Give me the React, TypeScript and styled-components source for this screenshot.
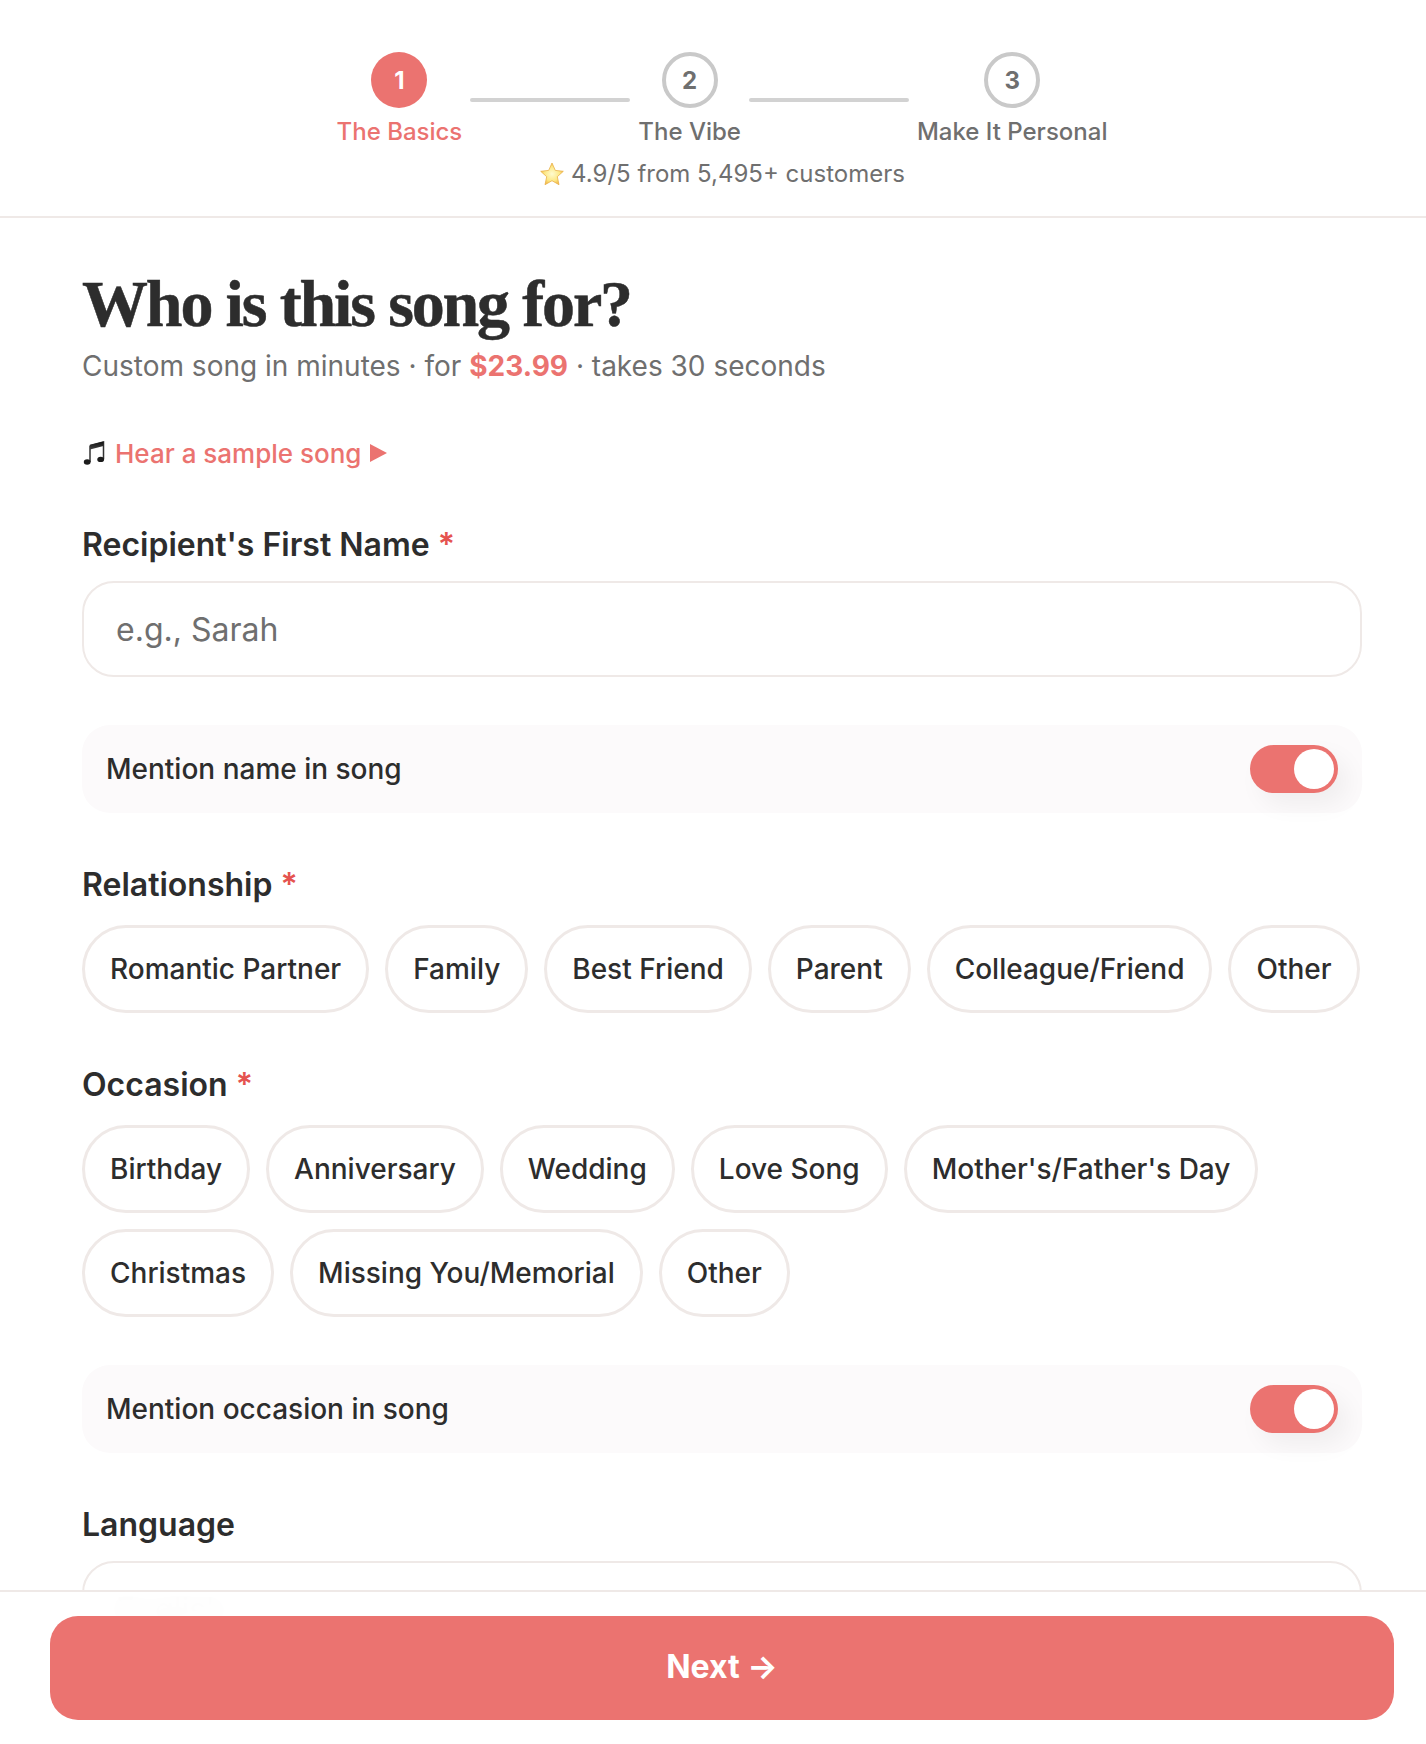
import styled, { createGlobalStyle } from "styled-components";

const coral = "#eb7370";
const ink = "#2d2d2d";
const muted = "#6f6f6f";
const line = "#efe9e7";

const GlobalStyle = createGlobalStyle`
  html, body {
    margin: 0;
    height: 100%;
    overflow: hidden;
    background: #fff;
    font-family: Inter, "Liberation Sans", sans-serif;
    color: ${ink};
  }
  * { box-sizing: border-box; }
`;

const steps = ["The Basics", "The Vibe", "Make It Personal"];
const relationships = ["Romantic Partner", "Family", "Best Friend", "Parent", "Colleague/Friend", "Other"];
const occasions = [
  "Birthday",
  "Anniversary",
  "Wedding",
  "Love Song",
  "Mother's/Father's Day",
  "Christmas",
  "Missing You/Memorial",
  "Other",
];

const StarIcon = () => (
  <svg width="26" height="26" viewBox="0 0 26 26">
    <defs>
      <radialGradient id="star" cx="0.5" cy="0.5" r="0.6">
        <stop offset="0" stopColor="#fffbd0" />
        <stop offset="0.55" stopColor="#fde886" />
        <stop offset="1" stopColor="#f0a72a" />
      </radialGradient>
    </defs>
    <path
      d="M13 2l3.3 7.4 8 .9-6 5.4 1.7 8-7-4-7 4 1.7-8-6-5.4 8-.9z"
      fill="url(#star)"
      stroke="#e8b04a"
      strokeWidth="0.8"
      strokeLinejoin="round"
    />
  </svg>
);

const NoteIcon = () => (
  <svg width="24" height="26" viewBox="0 0 24 26">
    <defs>
      <linearGradient id="note" x1="0" y1="0" x2="0" y2="1">
        <stop offset="0" stopColor="#111" />
        <stop offset="1" stopColor="#444" />
      </linearGradient>
    </defs>
    <path d="M8 5.5L21.5 2v17M8 5.5V22" fill="none" stroke="#333" strokeWidth="1.5" />
    <path d="M8 5L21.5 1.5v4.5L8 9.5z" fill="url(#note)" />
    <ellipse cx="5.2" cy="22" rx="3.4" ry="2.7" fill="#1c1c1c" />
    <ellipse cx="18.7" cy="19.4" rx="3.4" ry="2.7" fill="#1c1c1c" />
  </svg>
);

const App = () => {
  return (
    <Page>
      <GlobalStyle />
      <Header>
        <Stepper>
          {steps.map((label, i) => (
            <StepGroup key={label}>
              {i > 0 && <StepLine />}
              <Step>
                <StepCircle $active={i === 0}>{i + 1}</StepCircle>
                <StepLabel $active={i === 0}>{label}</StepLabel>
              </Step>
            </StepGroup>
          ))}
        </Stepper>
        <Rating>
          <StarIcon />
          4.9/5 from 5,495+ customers
        </Rating>
      </Header>

      <Content>
        <Title>Who is this song for?</Title>
        <Subtitle>
          Custom song in minutes · for <Price>$23.99</Price> · takes 30 seconds
        </Subtitle>
        <SampleLink>
          <NoteIcon />
          <SampleText>Hear a sample song</SampleText>
          <PlayArrow />
        </SampleLink>

        <NameLabel>
          Recipient's First Name <Required>*</Required>
        </NameLabel>
        <TextInput placeholder="e.g., Sarah" />

        <ToggleRow>
          <ToggleText>Mention name in song</ToggleText>
          <Toggle>
            <Knob />
          </Toggle>
        </ToggleRow>

        <SectionLabel>
          Relationship <Required>*</Required>
        </SectionLabel>
        <Chips>
          {relationships.map((item) => (
            <Chip key={item}>{item}</Chip>
          ))}
        </Chips>

        <SectionLabel>
          Occasion <Required>*</Required>
        </SectionLabel>
        <Chips>
          {occasions.map((item) => (
            <Chip key={item}>{item}</Chip>
          ))}
        </Chips>

        <ToggleRow>
          <ToggleText>Mention occasion in song</ToggleText>
          <Toggle>
            <Knob />
          </Toggle>
        </ToggleRow>

        <SectionLabel>Language</SectionLabel>
        <SelectBox>English</SelectBox>
      </Content>

      <Footer>
        <NextButton>Next →</NextButton>
      </Footer>
    </Page>
  );
};

export default App;

const Page = styled.div`
  height: 100vh;
  overflow: hidden;
`;

const Header = styled.header`
  height: 218px;
  padding: 52px 0 0 18px;
  border-bottom: 2px solid ${line};
  display: flex;
  flex-direction: column;
  align-items: center;
`;

const Stepper = styled.div`
  display: flex;
  align-items: flex-start;
`;

const StepGroup = styled.div`
  display: flex;
  align-items: flex-start;
`;

const Step = styled.div`
  display: flex;
  flex-direction: column;
  align-items: center;
`;

const StepCircle = styled.div<{ $active: boolean }>`
  width: 56px;
  height: 56px;
  border-radius: 50%;
  display: flex;
  align-items: center;
  justify-content: center;
  font-size: 24px;
  font-weight: 700;
  color: ${(p) => (p.$active ? "#fff" : muted)};
  background: ${(p) => (p.$active ? coral : "#fff")};
  border: ${(p) => (p.$active ? "none" : "4px solid #c9c9c9")};
`;

const StepLabel = styled.div<{ $active: boolean }>`
  margin-top: 8px;
  font-size: 24px;
  line-height: 32px;
  font-weight: 500;
  white-space: nowrap;
  color: ${(p) => (p.$active ? coral : muted)};
`;

const StepLine = styled.div`
  width: 160px;
  height: 4px;
  margin: 46px 8px 0;
  border-radius: 2px;
  background: #d2d2d2;
`;

const Rating = styled.div`
  margin-top: 10px;
  display: flex;
  align-items: center;
  gap: 6px;
  font-size: 24px;
  line-height: 32px;
  color: ${muted};
`;

const Content = styled.main`
  padding: 0 64px 0 82px;
`;

const Title = styled.h1`
  margin: 44px 0 0;
  font-family: "Liberation Serif", serif;
  font-size: 66px;
  line-height: 84px;
  font-weight: 700;
  letter-spacing: -2.15px;
  -webkit-text-stroke: 0.5px ${ink};
  color: ${ink};
`;

const Subtitle = styled.p`
  margin: 0;
  font-size: 28px;
  line-height: 40px;
  color: ${muted};
`;

const Price = styled.span`
  color: ${coral};
  font-weight: 700;
`;

const SampleLink = styled.div`
  margin-top: 49px;
  display: flex;
  align-items: center;
  gap: 9px;
  height: 36px;
`;

const SampleText = styled.span`
  font-size: 26px;
  font-weight: 500;
  color: ${coral};
`;

const PlayArrow = styled.span`
  width: 0;
  height: 0;
  border-left: 17px solid ${coral};
  border-top: 9px solid transparent;
  border-bottom: 9px solid transparent;
`;

const SectionLabel = styled.div`
  margin-top: 52px;
  font-size: 32px;
  line-height: 40px;
  font-weight: 600;
  color: ${ink};
`;

const NameLabel = styled(SectionLabel)`
  margin-top: 54px;
`;

const Required = styled.span`
  color: #e5534f;
`;

const TextInput = styled.input`
  display: block;
  width: 100%;
  height: 96px;
  margin-top: 16px;
  padding: 0 32px;
  border: 2px solid ${line};
  border-radius: 32px;
  font-family: inherit;
  font-size: 32px;
  color: ${ink};
  outline: none;

  &::placeholder {
    color: ${muted};
  }
`;

const ToggleRow = styled.div`
  height: 88px;
  margin-top: 48px;
  padding: 0 24px;
  border-radius: 28px;
  background: #fcfafb;
  display: flex;
  align-items: center;
  justify-content: space-between;
`;

const ToggleText = styled.span`
  font-size: 28px;
  font-weight: 500;
  color: ${ink};
`;

const Toggle = styled.div`
  width: 88px;
  height: 48px;
  padding: 4px;
  border-radius: 24px;
  background: ${coral};
  display: flex;
  justify-content: flex-end;
  box-shadow: 10px 12px 24px rgba(0, 0, 0, 0.05);
`;

const Knob = styled.div`
  width: 40px;
  height: 40px;
  border-radius: 50%;
  background: #fff;
`;

const Chips = styled.div`
  margin-top: 20px;
  display: flex;
  flex-wrap: wrap;
  gap: 16px;
`;

const Chip = styled.button`
  height: 88px;
  padding: 0 25px;
  border: 3px solid ${line};
  border-radius: 44px;
  background: #fff;
  font-family: inherit;
  font-size: 28px;
  font-weight: 500;
  color: ${ink};
`;

const SelectBox = styled.div`
  height: 96px;
  margin-top: 16px;
  padding: 0 32px;
  border: 2px solid ${line};
  border-radius: 32px;
  display: flex;
  align-items: center;
  font-size: 32px;
  color: ${ink};
`;

const Footer = styled.footer`
  position: fixed;
  left: 0;
  right: 0;
  bottom: 0;
  height: 154px;
  padding: 24px 32px 0 50px;
  background: rgba(255, 255, 255, 0.97);
  backdrop-filter: blur(10px);
  border-top: 2px solid ${line};
`;

const NextButton = styled.button`
  display: block;
  width: 100%;
  height: 104px;
  padding: 0 0 3px;
  border: none;
  border-radius: 28px;
  background: ${coral};
  color: #fff;
  font-family: inherit;
  font-size: 32px;
  font-weight: 700;
`;
